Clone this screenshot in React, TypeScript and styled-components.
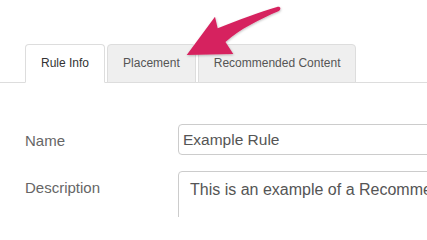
import styled, { createGlobalStyle } from 'styled-components';

const GlobalStyle = createGlobalStyle`
  html, body {
    margin: 0;
    padding: 0;
    background: #fff;
    overflow: hidden;
  }
  body {
    font-family: "Liberation Sans", Arial, Helvetica, sans-serif;
  }
`;

const tabs = ['Rule Info', 'Placement', 'Recommended Content'];

export default function App() {
  return (
    <$Page>
      <GlobalStyle />
      <$TabList>
        {tabs.map((tab, index) => (
          <$Tab key={tab} $active={index === 0}>
            {tab}
          </$Tab>
        ))}
      </$TabList>
      <$Form>
        <$Label>Name</$Label>
        <$Input defaultValue="Example Rule" />
        <$Label>Description</$Label>
        <$TextArea defaultValue="This is an example of a Recommended Content rule." />
      </$Form>
      <$Arrow viewBox="0 0 110 60" width="110" height="60">
        <defs>
          <filter id="arrowShadow" x="-10%" y="-10%" width="130%" height="130%">
            <feDropShadow dx="0.5" dy="1" stdDeviation="0.8" floodColor="#000" floodOpacity="0.25" />
          </filter>
        </defs>
        <path
          d="M6.7 55 L35 16.7 L37.7 28.3 C58 20 80 12 97 7 C100.5 6 101.5 9 99 11 C80 19 60 29 45.5 42 L53.3 54 Z"
          fill="#d6245f"
          filter="url(#arrowShadow)"
        />
      </$Arrow>
    </$Page>
  );
}

const $Page = styled.div`
  position: relative;
  width: 427px;
  height: 217px;
  padding-top: 44px;
  box-sizing: border-box;
  overflow: hidden;
`;

const $TabList = styled.ul`
  display: flex;
  margin: 0;
  padding: 0 0 0 25px;
  list-style: none;
  border-bottom: 1px solid #ddd;
`;

const $Tab = styled.li<{ $active: boolean }>`
  margin: 0 2px -1px 0;
  padding: 10px 15px;
  font-size: 12px;
  line-height: 17px;
  white-space: nowrap;
  border: 1px solid #ddd;
  border-bottom-color: ${(p) => (p.$active ? '#fff' : '#ddd')};
  border-radius: 4px 4px 0 0;
  background: ${(p) => (p.$active ? '#fff' : '#efefef')};
  color: ${(p) => (p.$active ? '#333' : '#555')};
`;

const $Form = styled.div`
  display: grid;
  grid-template-columns: 153px 440px;
  row-gap: 16px;
  margin-top: 41px;
  padding-left: 25px;
`;

const $Label = styled.label`
  padding-top: 8px;
  font-size: 15px;
  line-height: 17px;
  color: #666;
`;

const $Input = styled.input`
  box-sizing: border-box;
  height: 31px;
  padding: 0 4px;
  border: 1px solid #ccc;
  border-radius: 4px;
  font-family: inherit;
  font-size: 15.5px;
  color: #555;
  outline: none;
`;

const $TextArea = styled.textarea`
  box-sizing: border-box;
  height: 80px;
  padding: 9px 11px;
  border: 1px solid #ccc;
  border-radius: 4px;
  font-family: inherit;
  font-size: 16px;
  line-height: 17px;
  color: #555;
  resize: none;
  overflow: hidden;
  outline: none;
`;

const $Arrow = styled.svg`
  position: absolute;
  left: 180px;
  top: 0;
  overflow: visible;
`;
